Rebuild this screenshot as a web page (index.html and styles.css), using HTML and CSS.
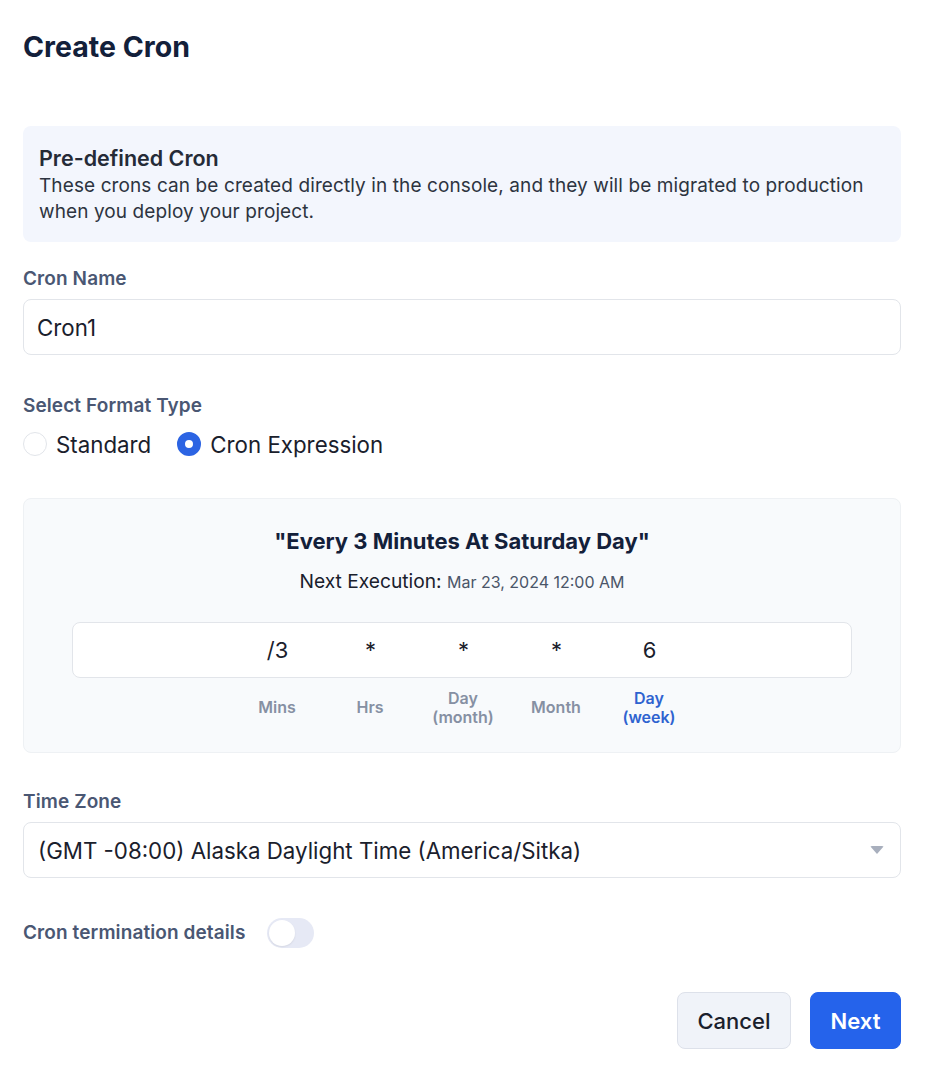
FILE: index.html
```html
<!DOCTYPE html>
<html lang="en">
<head>
<meta charset="utf-8">
<title>Create Cron</title>
<link rel="stylesheet" href="styles.css">
</head>
<body>
<div class="page">
  <h1 class="title">Create Cron</h1>

  <div class="info">
    <div class="info-title">Pre-defined Cron</div>
    <div class="info-text">These crons can be created directly in the console, and they will be migrated to production when you deploy your project.</div>
  </div>

  <div class="label label-name">Cron Name</div>
  <div class="input">Cron1</div>

  <div class="label label-format">Select Format Type</div>
  <div class="radios">
    <div class="radio"><span class="dot"></span><span>Standard</span></div>
    <div class="radio"><span class="dot dot-on"></span><span>Cron Expression</span></div>
  </div>

  <div class="cron-box">
    <div class="cron-title">"Every 3 Minutes At Saturday Day"</div>
    <div class="next">Next Execution: <span class="next-date">Mar 23, 2024 12:00 AM</span></div>
    <div class="expr">
      <span class="cell">/3</span>
      <span class="cell">*</span>
      <span class="cell">*</span>
      <span class="cell">*</span>
      <span class="cell">6</span>
    </div>
    <div class="parts">
      <span class="part">Mins</span>
      <span class="part">Hrs</span>
      <span class="part">Day<br>(month)</span>
      <span class="part">Month</span>
      <span class="part part-on">Day<br>(week)</span>
    </div>
  </div>

  <div class="label label-tz">Time Zone</div>
  <div class="input select">
    <span>(GMT -08:00) Alaska Daylight Time (America/Sitka)</span>
    <span class="caret"></span>
  </div>

  <div class="toggle-row">
    <span class="label">Cron termination details</span>
    <span class="toggle"><span class="knob"></span></span>
  </div>

  <div class="actions">
    <button class="btn btn-cancel">Cancel</button>
    <button class="btn btn-next">Next</button>
  </div>
</div>
</body>
</html>
```

FILE: styles.css
```css
* { box-sizing: border-box; }
html, body { margin: 0; padding: 0; background: #ffffff; }
body {
  font-family: Inter, "Noto Sans", "Liberation Sans", sans-serif;
  color: #1a202c;
}
.page {
  padding: 28px 24px 0 23px;
  display: flex;
  flex-direction: column;
}
.title {
  margin: 0;
  font-size: 28.5px;
  line-height: 38px;
  font-weight: 700;
  color: #13203a;
}
.info {
  margin-top: 60px;
  background: #f3f6fd;
  border-radius: 8px;
  padding: 18px 16px 17px 16px;
}
.info-title {
  font-size: 21.5px;
  line-height: 28px;
  font-weight: 600;
  color: #252b37;
}
.info-text {
  margin-top: 1px;
  font-size: 19px;
  line-height: 26px;
  letter-spacing: 0.1px;
  color: #2d3440;
}
.label {
  font-size: 19px;
  line-height: 24px;
  font-weight: 600;
  letter-spacing: 0.1px;
  color: #4a5773;
}
.label-name { margin-top: 25px; }
.label-format { margin-top: 39px; }
.label-tz { margin-top: 37px; }
.input {
  margin-top: 8px;
  height: 56px;
  border: 1px solid #e2e5ea;
  border-radius: 8px;
  padding: 0 13px;
  display: flex;
  align-items: center;
  font-size: 22.3px;
  color: #1a202c;
}
.radios {
  margin-top: 12px;
  height: 28px;
  display: flex;
  align-items: center;
  gap: 26px;
}
.radio {
  display: flex;
  align-items: center;
  gap: 9px;
  font-size: 22.3px;
  color: #1a202c;
}
.dot {
  width: 24px;
  height: 24px;
  border-radius: 50%;
  border: 1px solid #e2e5ea;
  background: #fff;
}
.dot-on {
  border: 8px solid #2c64e3;
  background: #fff;
}
.cron-box {
  margin-top: 40px;
  background: #f8fafc;
  border: 1px solid #eef1f4;
  border-radius: 8px;
  padding: 27px 48px 25px 48px;
  display: flex;
  flex-direction: column;
  align-items: center;
}
.cron-title {
  font-size: 22px;
  line-height: 30px;
  font-weight: 700;
  color: #13203a;
}
.next {
  margin-top: 13px;
  font-size: 19.2px;
  line-height: 24px;
  color: #1a202c;
}
.next-date {
  font-size: 16px;
  color: #4a5568;
}
.expr {
  margin-top: 28px;
  width: 100%;
  height: 56px;
  background: #fff;
  border: 1px solid #e2e5ea;
  border-radius: 8px;
  display: flex;
  justify-content: center;
  align-items: center;
  padding-left: 3px;
}
.cell, .part {
  width: 93px;
  text-align: center;
}
.cell {
  font-size: 22px;
  color: #1a202c;
}
.parts {
  margin-top: 10px;
  width: 100%;
  display: flex;
  justify-content: center;
  align-items: center;
  height: 39px;
  padding-left: 2px;
}
.part {
  font-size: 16px;
  line-height: 19px;
  font-weight: 600;
  color: #8690a3;
}
.part-on { color: #2f63d0; }
.select {
  justify-content: space-between;
  padding-left: 14px;
  padding-right: 16px;
}
.caret {
  width: 0;
  height: 0;
  border-left: 7px solid transparent;
  border-right: 7px solid transparent;
  border-top: 8px solid #a8afbd;
  border-radius: 2px;
}
.toggle-row {
  margin-top: 40px;
  height: 30px;
  display: flex;
  align-items: center;
  gap: 22px;
}
.toggle {
  width: 47px;
  height: 30px;
  border-radius: 15px;
  background: #e6e9f5;
  padding: 2px;
  display: flex;
  align-items: center;
}
.knob {
  width: 26px;
  height: 26px;
  border-radius: 50%;
  background: #fff;
  box-shadow: 0 1px 2px rgba(0,0,0,0.08);
}
.actions {
  margin-top: 44px;
  display: flex;
  justify-content: flex-end;
  gap: 19px;
}
.btn {
  height: 57px;
  border-radius: 8px;
  font-family: inherit;
  font-size: 22px;
  font-weight: 500;
  padding: 0 10px;
  cursor: pointer;
}
.btn-cancel {
  width: 114px;
  background: #f0f3f9;
  border: 1px solid #dde1ea;
  color: #1a202c;
}
.btn-next {
  width: 91px;
  background: #2563eb;
  border: 1px solid #2563eb;
  color: #fff;
  font-weight: 600;
}
```
